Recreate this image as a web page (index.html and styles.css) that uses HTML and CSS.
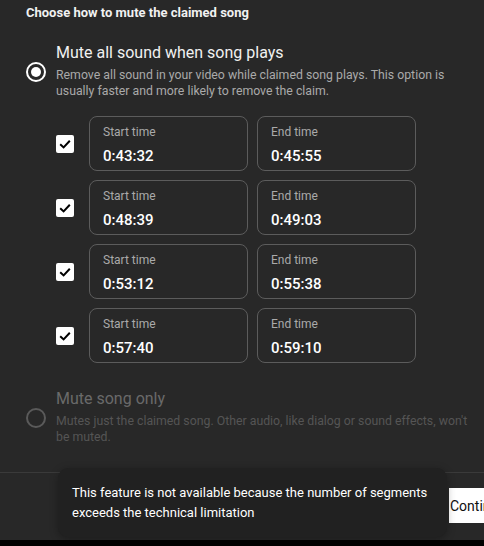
FILE: index.html
```html
<!DOCTYPE html>
<html>
<head>
<meta charset="utf-8">
<link rel="stylesheet" href="styles.css">
</head>
<body>
<div class="dialog">
  <div class="title">Choose how to mute the claimed song</div>

  <div class="option">
    <span class="radio checked"></span>
    <div class="option-text">
      <div class="option-title">Mute all sound when song plays</div>
      <div class="option-desc">Remove all sound in your video while claimed song plays. This option is usually faster and more likely to remove the claim.</div>
    </div>
  </div>

  <div class="rows">
    <div class="row">
      <span class="check"><svg viewBox="0 0 18 18" width="18" height="18"><path d="M4.2 9.2 L7.6 12.4 L13.8 5.8" fill="none" stroke="#000" stroke-width="2"/></svg></span>
      <div class="field"><div class="label">Start time</div><div class="value">0:43:32</div></div>
      <div class="field"><div class="label">End time</div><div class="value">0:45:55</div></div>
    </div>
    <div class="row">
      <span class="check"><svg viewBox="0 0 18 18" width="18" height="18"><path d="M4.2 9.2 L7.6 12.4 L13.8 5.8" fill="none" stroke="#000" stroke-width="2"/></svg></span>
      <div class="field"><div class="label">Start time</div><div class="value">0:48:39</div></div>
      <div class="field"><div class="label">End time</div><div class="value">0:49:03</div></div>
    </div>
    <div class="row">
      <span class="check"><svg viewBox="0 0 18 18" width="18" height="18"><path d="M4.2 9.2 L7.6 12.4 L13.8 5.8" fill="none" stroke="#000" stroke-width="2"/></svg></span>
      <div class="field"><div class="label">Start time</div><div class="value">0:53:12</div></div>
      <div class="field"><div class="label">End time</div><div class="value">0:55:38</div></div>
    </div>
    <div class="row">
      <span class="check"><svg viewBox="0 0 18 18" width="18" height="18"><path d="M4.2 9.2 L7.6 12.4 L13.8 5.8" fill="none" stroke="#000" stroke-width="2"/></svg></span>
      <div class="field"><div class="label">Start time</div><div class="value">0:57:40</div></div>
      <div class="field"><div class="label">End time</div><div class="value">0:59:10</div></div>
    </div>
  </div>

  <div class="option disabled">
    <span class="radio"></span>
    <div class="option-text">
      <div class="option-title">Mute song only</div>
      <div class="option-desc">Mutes just the claimed song. Other audio, like dialog or sound effects, won't be muted.</div>
    </div>
  </div>

  <div class="footer">
    <button class="continue">Continue</button>
  </div>

  <div class="toast">This feature is not available because the number of segments exceeds the technical limitation</div>
</div>
</body>
</html>
```

FILE: styles.css
```css
html, body {
  margin: 0;
  padding: 0;
  background: #000;
  overflow: hidden;
}
body {
  font-family: Roboto, "Liberation Sans", sans-serif;
  color: #fff;
}
.dialog {
  position: relative;
  width: 484px;
  height: 540px;
  background: #282828;
  overflow: hidden;
}
.title {
  padding: 5px 26px 0;
  font-size: 13px;
  font-weight: 700;
  line-height: 16px;
  color: #f1f1f1;
}
.option {
  display: flex;
  align-items: center;
  padding-left: 26px;
  margin-top: 22px;
}
.radio {
  flex: none;
  width: 20px;
  height: 20px;
  box-sizing: border-box;
  border: 2px solid #fff;
  border-radius: 50%;
  margin-right: 10px;
  margin-top: 2px;
  display: flex;
  align-items: center;
  justify-content: center;
}
.radio.checked::after {
  content: "";
  width: 10px;
  height: 10px;
  border-radius: 50%;
  background: #fff;
}
.option-title {
  font-size: 16px;
  line-height: 20px;
  color: #f1f1f1;
}
.option-desc {
  margin-top: 4px;
  font-size: 12.3px;
  line-height: 16px;
  color: #aaaaaa;
  padding-right: 14px;
}
.rows {
  margin-top: 17px;
  padding-left: 56px;
  display: flex;
  flex-direction: column;
  gap: 9px;
}
.row {
  display: flex;
  align-items: center;
}
.check {
  width: 18px;
  height: 18px;
  background: #fff;
  border-radius: 2px;
  margin-right: 15px;
  display: flex;
}
.field {
  width: 159px;
  height: 55px;
  box-sizing: border-box;
  border: 1px solid #5c5c5c;
  border-radius: 8px;
  padding: 7px 13px 0;
  margin-right: 9px;
}
.label {
  font-size: 12px;
  line-height: 16px;
  color: #aaaaaa;
}
.value {
  margin-top: 6px;
  font-size: 15px;
  font-weight: 500;
  line-height: 20px;
  color: #fff;
}
.option.disabled {
  margin-top: 26px;
}
.option.disabled .radio {
  border-color: #5a5a5a;
}
.option.disabled .option-title {
  color: #6a6a6a;
}
.option.disabled .option-desc {
  color: #555555;
}
.footer {
  margin-top: 27px;
  border-top: 1px solid #3a3a3a;
  padding: 15px 0 0 449px;
}
.continue {
  display: block;
  width: 90px;
  height: 35px;
  border: none;
  border-radius: 0;
  background: #fff;
  color: #0f0f0f;
  font-family: Roboto, "Liberation Sans", sans-serif;
  font-size: 14px;
  text-align: left;
  padding: 0 0 0 1px;
}
.toast {
  position: absolute;
  left: 58px;
  top: 468px;
  width: 389px;
  height: 69px;
  box-sizing: border-box;
  padding: 0 14px;
  display: flex;
  align-items: center;
  background: #212121;
  border-radius: 10px;
  box-shadow: 0 2px 8px rgba(0,0,0,0.3);
  font-size: 13px;
  line-height: 20px;
  color: #fff;
}
```
